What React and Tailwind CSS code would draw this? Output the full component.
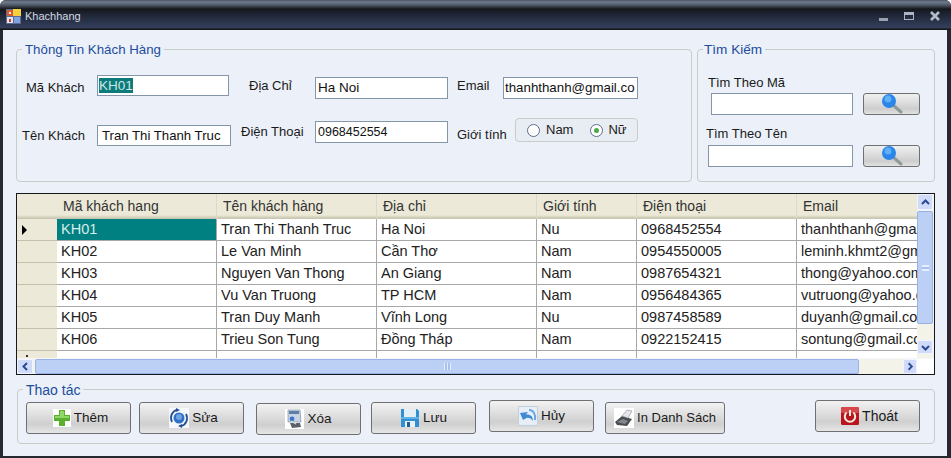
import React from 'react'

const rows = [
    ['KH01', 'Tran Thi Thanh Truc', 'Ha Noi', 'Nu', '0968452554', 'thanhthanh@gmail.com'],
    ['KH02', 'Le Van Minh', 'Cần Thơ', 'Nam', '0954550005', 'leminh.khmt2@gmail.com'],
    ['KH03', 'Nguyen Van Thong', 'An Giang', 'Nam', '0987654321', 'thong@yahoo.com'],
    ['KH04', 'Vu Van Truong', 'TP HCM', 'Nam', '0956484365', 'vutruong@yahoo.com'],
    ['KH05', 'Tran Duy Manh', 'Vĩnh Long', 'Nu', '0987458589', 'duyanh@gmail.com'],
    ['KH06', 'Trieu Son Tung', 'Đồng Tháp', 'Nam', '0922152415', 'sontung@gmail.com'],
]

const cols = [
    { title: 'Mã khách hang', width: 'w-[160px]' },
    { title: 'Tên khách hàng', width: 'w-[160px]' },
    { title: 'Địa chỉ', width: 'w-[160px]' },
    { title: 'Giới tính', width: 'w-[100px]' },
    { title: 'Điện thoại', width: 'w-[160px]' },
    { title: 'Email', width: 'w-[160px]' },
]

const AppIcon = () => (
    <svg width="15" height="15" viewBox="0 0 15 15" className="shrink-0">
        <rect x="0" y="0" width="15" height="15" fill="#5a6a90" />
        <rect x="1" y="1" width="6" height="6" fill="#d85a30" />
        <rect x="7" y="0" width="8" height="7" fill="#f6d040" />
        <rect x="1" y="8" width="6" height="6" fill="#dfe4f0" />
        <rect x="8" y="8" width="6" height="6" fill="#7ea4e0" />
        <rect x="3" y="3" width="2" height="2" fill="#f8e8d0" />
        <rect x="3" y="10" width="2" height="3" fill="#d83a20" />
    </svg>
)

const SearchIcon = () => (
    <svg width="22" height="20" viewBox="0 0 22 20">
        <path d="M12 11 L20 18" stroke="#8f9a9a" strokeWidth="3" strokeLinecap="round" />
        <circle cx="8" cy="7" r="7" fill="#2a86e8" />
        <circle cx="7" cy="5" r="3.5" fill="#5fb0f5" />
    </svg>
)

const PlusIcon = () => (
    <svg width="18" height="18" viewBox="0 0 18 18" className="bg-white">
        <path d="M6 1 H12 V6 H17 V12 H12 V17 H6 V12 H1 V6 H6 Z" fill="#5cb030" />
        <path d="M7 2 H11 V7 H16 V9 H2 V7 H7 Z" fill="#8fd868" />
    </svg>
)

const RefreshIcon = () => (
    <svg width="20" height="20" viewBox="0 0 20 20" className="bg-[#f4f7fc]">
        <circle cx="10" cy="10" r="5.5" fill="#2f6fc4" />
        <circle cx="10" cy="9" r="3" fill="#6ea4e4" />
        <path d="M3 14 A8.5 8.5 0 0 1 8 1.8" fill="none" stroke="#27508e" strokeWidth="1.8" />
        <path d="M17 6 A8.5 8.5 0 0 1 12 18.2" fill="none" stroke="#27508e" strokeWidth="1.8" />
        <path d="M7 0 L11 2 L7 4 Z" fill="#27508e" />
        <path d="M13 20 L9 18 L13 16 Z" fill="#27508e" />
    </svg>
)

const DeleteIcon = () => (
    <svg width="19" height="20" viewBox="0 0 19 20" className="bg-white">
        <path d="M3 1 H15 L16 13 H3 Z" fill="#c8d4e4" stroke="#7f8fa4" strokeWidth="0.7" />
        <rect x="4" y="2" width="10" height="3" fill="#5f7ea4" />
        <circle cx="7" cy="10" r="2.4" fill="#3a76c8" />
        <path d="M5 14 L15 14 L16 18 L7 19 Z" fill="#5a5f68" />
        <path d="M6 12 L11 15" stroke="#d8dce4" strokeWidth="1.4" />
    </svg>
)

const SaveIcon = () => (
    <svg width="20" height="20" viewBox="0 0 20 20">
        <path d="M1 1 H17 L19 3 V19 H1 Z" fill="#2f8fd0" />
        <rect x="4" y="1" width="12" height="8" fill="#e4eef6" />
        <rect x="1" y="9" width="18" height="2" fill="#5fb2e4" />
        <rect x="5" y="13" width="10" height="6" fill="#e8f0f6" />
        <rect x="7" y="14" width="3" height="5" fill="#1f5f98" />
    </svg>
)

const UndoIcon = () => (
    <svg width="20" height="20" viewBox="0 0 20 20" className="bg-[#e8eef8]">
        <rect x="0.5" y="0.5" width="19" height="19" fill="none" stroke="#c4cedc" />
        <path d="M5 14 L2 7 L10 6 L8 8.5 C12 8 15 10 15 15 C13 12 11 11.5 8.5 12 Z" fill="#3f8ad0" />
        <path d="M11 4 C15 4 18 8 17 14" fill="none" stroke="#6aa8e0" strokeWidth="2" />
    </svg>
)

const PrintIcon = () => (
    <svg width="20" height="20" viewBox="0 0 20 20" className="bg-white">
        <path d="M1 14 L8 8 L18 11 L13 18 L3 17 Z" fill="#4a4e54" />
        <path d="M8 8 L13 2 L18 3 L14 10 Z" fill="#e4e6ea" stroke="#85898f" strokeWidth="0.6" />
        <path d="M3 14 L9 11 L14 13 L11 16 Z" fill="#84888e" />
    </svg>
)

const PowerIcon = () => (
    <svg width="18" height="18" viewBox="0 0 18 18">
        <rect x="0" y="0" width="18" height="18" rx="1.5" fill="#b8161c" />
        <rect x="0" y="0" width="18" height="6" rx="1.5" fill="#d8484a" />
        <path d="M5.6 5.6 A5.2 5.2 0 1 0 12.4 5.6" fill="none" stroke="#f6ece0" strokeWidth="2" />
        <path d="M9 3 V9" stroke="#f6ece0" strokeWidth="2" />
    </svg>
)

const Chevron = ({ dir }) => {
    const paths = {
        up: 'M3 8 L6.5 4.5 L10 8',
        down: 'M3 5 L6.5 8.5 L10 5',
        left: 'M8 3 L4.5 6.5 L8 10',
        right: 'M5 3 L8.5 6.5 L5 10',
    }
    return (
        <svg width="13" height="13" viewBox="0 0 13 13">
            <path d={paths[dir]} fill="none" stroke="#2b4a94" strokeWidth="2" />
        </svg>
    )
}

const ArrowBtn = ({ dir, className }) => (
    <div className={`flex items-center justify-center rounded-[2px] border border-[#f2f5fe] bg-[#cfdbf8] shrink-0 ${className}`}>
        <Chevron dir={dir} />
    </div>
)

const GroupBox = ({ title, legendClass, className, children }) => (
    <div className={`relative rounded-[4px] border border-[#c8ccc8] ${className}`}>
        <span className={`absolute bg-[#ecf1f9] leading-[16px] text-[#1c4c9c] ${legendClass}`}>{title}</span>
        {children}
    </div>
)

const Input = ({ value, className }) => (
    <div className={`flex items-center overflow-hidden whitespace-nowrap border border-[#8496a8] bg-white text-[#111] ${className}`}>
        {value}
    </div>
)

const Label = ({ children, className }) => (
    <span className={`whitespace-nowrap text-[13px] leading-[16px] text-[#1a1a1a] ${className}`}>{children}</span>
)

const Radio = ({ checked }) => (
    <span className="flex h-[13px] w-[13px] items-center justify-center rounded-full border border-[#5a6f8c] bg-white">
        {checked && <span className="h-[5px] w-[5px] rounded-full bg-[#4da84d]" />}
    </span>
)

const Btn = ({ icon, label, className }) => (
    <div className={`flex h-[32px] items-center justify-center gap-[3px] rounded-[3px] border border-[#6e7074] bg-[linear-gradient(to_bottom,#f2f2f2_0%,#dcdcdc_45%,#cfcfcf_70%,#e6e6e6_100%)] text-[#1a1a1a] shrink-0 ${className}`}>
        {icon}
        <span>{label}</span>
    </div>
)

const SearchBtn = ({ className }) => (
    <div className={`flex h-[22px] w-[57px] items-center justify-center rounded-[3px] border border-[#6e7074] bg-[linear-gradient(to_bottom,#f0f0f0_0%,#dadada_50%,#cdcdcd_75%,#e2e2e2_100%)] shrink-0 ${className}`}>
        <SearchIcon />
    </div>
)

const App = () => {
    return (
        <div className="h-[458px] w-[951px] overflow-hidden bg-white font-['Liberation_Sans',sans-serif]">
            <div className="flex h-full flex-col overflow-hidden rounded-t-[6px] bg-[#262a30]">
                {/* title bar */}
                <div className="flex h-[30px] shrink-0 items-center bg-[linear-gradient(to_bottom,#4a525e_0px,#6f7c90_2px,#505a68_5px,#15171b_9px,#1c2230_13px,#2f3a55_25px,#333e5a_28px,#14161a_29px)] pl-[6px] pt-[2px]">
                    <AppIcon />
                    <span className="ml-[4px] text-[11px] leading-none text-[#d4dae2]">Khachhang</span>
                    <div className="ml-auto mr-[11px] flex items-center">
                        <div className="mt-[7px] h-[3px] w-[9px] bg-[#98a2b0]" />
                        <div className="ml-[16px] h-[8px] w-[10px] border border-t-[3px] border-[#aab4c2]" />
                        <svg width="10" height="10" viewBox="0 0 10 10" className="ml-[16px]">
                            <path d="M1 1 L9 9 M9 1 L1 9" stroke="#b4bcc8" strokeWidth="2.6" />
                        </svg>
                    </div>
                </div>

                {/* form body */}
                <div className="ml-[3px] mr-[4px] flex h-[426px] shrink-0 flex-col bg-[#ecf1f9] pl-[13px]">
                    <div className="mt-[19px] flex gap-[5px]">
                        <GroupBox title="Thông Tin Khách Hàng" legendClass="left-[5px] top-[-8px] pl-[3px] pr-[3px] text-[13.3px]" className="flex h-[133px] w-[676px] pl-[5px]">
                            <div className="flex w-[219px] flex-col">
                                <div className="mt-[25px] flex items-start">
                                    <Label className="ml-[4px] mt-[5px] w-[71px]">Mã Khách</Label>
                                    <Input value={<span className="bg-[#0b7b7b] leading-[15px] text-[#cfe6e6]">KH01</span>} className="mb-[2px] h-[21px] w-[132px] pb-[1px] pl-[1px] text-[13.5px]" />
                                </div>
                                <div className="mt-[27px] flex items-center">
                                    <Label className="w-[75px]">Tên Khách</Label>
                                    <Input value="Tran Thi Thanh Truc" className="h-[21px] w-[134px] pl-[4px] text-[13.2px]" />
                                </div>
                            </div>
                            <div className="flex w-[216px] flex-col">
                                <div className="mt-[27px] flex items-start">
                                    <Label className="ml-[8px] mt-[1px] w-[66px]">Địa Chỉ</Label>
                                    <Input value="Ha Noi" className="h-[22px] w-[133px] pl-[2px] text-[13.5px]" />
                                </div>
                                <div className="mt-[22px] flex items-center">
                                    <Label className="w-[74px]">Điện Thoại</Label>
                                    <Input value="0968452554" className="h-[22px] w-[133px] pl-[2px] text-[12.5px]" />
                                </div>
                            </div>
                            <div className="flex flex-col">
                                <div className="mt-[27px] flex items-start">
                                    <Label className="mt-[1px] w-[46px]">Email</Label>
                                    <Input value="thanhthanh@gmail.co" className="h-[22px] w-[135px] pl-[1px] text-[13.3px]" />
                                </div>
                                <div className="mt-[19px] flex items-start">
                                    <Label className="mt-[9px] w-[58px]">Giới tính</Label>
                                    <div className="flex h-[24px] w-[123px] items-center rounded-[4px] border border-[#c8ccc8] bg-[#e8edf4] pl-[11px] text-[13px] text-[#1a1a1a]">
                                        <Radio />
                                        <span className="ml-[6px]">Nam</span>
                                        <span className="ml-[17px]"><Radio checked /></span>
                                        <span className="ml-[5px]">Nữ</span>
                                    </div>
                                </div>
                            </div>
                        </GroupBox>

                        <GroupBox title="Tìm Kiếm" legendClass="left-[5px] top-[-8px] pl-[1px] pr-[3px] text-[13.6px]" className="h-[133px] w-[238px]">
                            <div className="flex flex-col">
                                <Label className="ml-[10px] mt-[25px] text-[13.5px]">Tìm Theo Mã</Label>
                                <div className="mt-[2px] flex">
                                    <Input value="" className="ml-[13px] h-[22px] w-[142px]" />
                                    <SearchBtn className="ml-[10px]" />
                                </div>
                                <Label className="ml-[8px] mt-[11px]">Tìm Theo Tên</Label>
                                <div className="mt-[3px] flex">
                                    <Input value="" className="ml-[10px] h-[22px] w-[145px]" />
                                    <SearchBtn className="ml-[10px]" />
                                </div>
                            </div>
                        </GroupBox>
                    </div>

                    {/* data grid */}
                    <div className="mt-[11px] flex h-[182px] w-[919px] flex-col border border-[#16181c] bg-white">
                        <div className="flex h-[164px] shrink-0">
                            <div className="w-[900px] overflow-hidden">
                                <div className="flex h-[25px] bg-[linear-gradient(to_bottom,#ece9d8_0,#ece9d8_21px,#d6d3be_23px,#c4c2ac_25px)]">
                                    <div className="w-[40px] shrink-0" />
                                    {cols.map((c) => (
                                        <div key={c.title} className={`flex items-center whitespace-nowrap border-r border-[#dcd9c6] pb-[1px] pl-[6px] text-[14px] text-[#333] shrink-0 ${c.width}`}>
                                            {c.title}
                                        </div>
                                    ))}
                                </div>
                                {rows.map((r, i) => (
                                    <div key={r[0]} className="flex h-[22px]">
                                        <div className="flex w-[40px] items-center border-b border-[#c4c2ac] bg-[#ece9d8] pl-[5px] shrink-0">
                                            {i === 0 && <span className="h-0 w-0 border-y-[5px] border-l-[5px] border-y-transparent border-l-black" />}
                                        </div>
                                        {r.map((v, j) => (
                                            <div key={j} className={`flex items-center overflow-hidden whitespace-nowrap border-b border-r border-[#a8a8a8] pl-[4px] pt-[1px] text-[14.5px] shrink-0 ${cols[j].width} ${i === 0 && j === 0 ? 'bg-[#008080] text-[#d8ecec]' : 'bg-white text-[#222]'}`}>
                                                {v}
                                            </div>
                                        ))}
                                    </div>
                                ))}
                                <div className="flex h-[7px]">
                                    <div className="w-[40px] bg-[#ece9d8] pl-[9px] pt-[4px] shrink-0">
                                        <div className="h-[2px] w-[2px] bg-[#333]" />
                                    </div>
                                    {cols.map((c) => (
                                        <div key={c.title} className={`border-r border-[#a8a8a8] shrink-0 ${c.width}`} />
                                    ))}
                                </div>
                            </div>
                            <div className="flex w-[17px] flex-col bg-[#f3f3ea]">
                                <ArrowBtn dir="up" className="h-[16px] w-[16px]" />
                                <div className="mt-[1px] flex h-[113px] w-[16px] items-center justify-center rounded-[2px] border border-[#98b2e8] bg-[#bcd0f6]">
                                    <div className="h-[6px] w-[7px] border-y border-[#e6eefc] bg-[linear-gradient(to_bottom,#e6eefc_1px,#a8c0ee_1px,#a8c0ee_3px,#e6eefc_3px)]" />
                                </div>
                                <ArrowBtn dir="down" className="mt-auto mb-[4px] h-[14px] w-[16px]" />
                            </div>
                        </div>
                        <div className="flex h-[16px] items-center border-t border-[#f4f6fc] bg-[#f3f3ea]">
                            <ArrowBtn dir="left" className="h-[15px] w-[16px]" />
                            <div className="ml-[2px] flex h-[15px] w-[824px] items-center justify-center rounded-[2px] border border-[#98b2e8] bg-[#bcd0f6]">
                                <div className="h-[7px] w-[7px] bg-[linear-gradient(to_right,#e6eefc_1px,#a8c0ee_1px,#a8c0ee_3px,#e6eefc_3px,#e6eefc_4px,#a8c0ee_4px,#a8c0ee_6px,#e6eefc_6px)]" />
                            </div>
                            <ArrowBtn dir="right" className="ml-[44px] h-[15px] w-[14px]" />
                            <div className="h-full flex-1 bg-white" />
                        </div>
                    </div>

                    {/* actions */}
                    <GroupBox title="Thao tác" legendClass="left-[5px] top-[-8px] pl-[3px] pr-[3px] text-[14px]" className="ml-[1px] mt-[14px] flex h-[55px] w-[918px] items-start pl-[8px]">
                        <Btn icon={<PlusIcon />} label="Thêm" className="mt-[12px] w-[105px] pl-[4px] text-[13.5px]" />
                        <Btn icon={<RefreshIcon />} label="Sửa" className="ml-[8px] mt-[12px] w-[105px] pl-[4px] text-[13.5px]" />
                        <Btn icon={<DeleteIcon />} label="Xóa" className="ml-[12px] mt-[13px] w-[105px] text-[13.5px]" />
                        <Btn icon={<SaveIcon />} label="Lưu" className="ml-[10px] mt-[12px] w-[105px] text-[13.5px]" />
                        <Btn icon={<UndoIcon />} label="Hủy" className="ml-[13px] mt-[10px] w-[105px] text-[13.5px]" />
                        <Btn icon={<PrintIcon />} label="In Danh Sách" className="ml-[11px] mt-[12px] w-[120px] text-[13px]" />
                        <Btn icon={<PowerIcon />} label="Thoát" className="ml-[90px] mt-[10px] w-[105px] pl-[4px] text-[14px]" />
                    </GroupBox>
                </div>
            </div>
        </div>
    )
}

export default App
